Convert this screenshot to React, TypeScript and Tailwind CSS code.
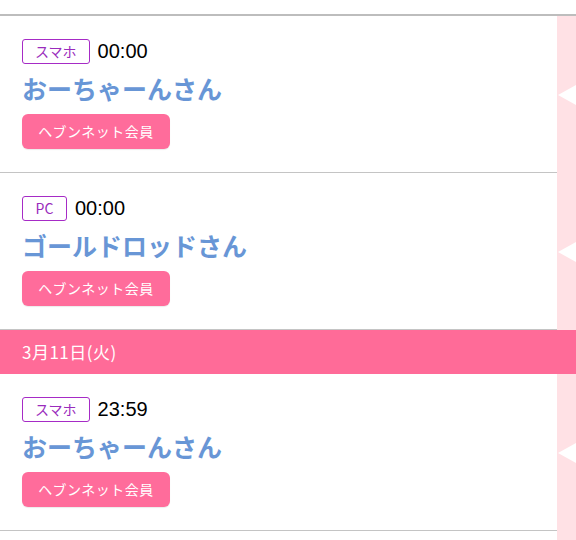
import React from "react";

const font = { fontFamily: '"Noto Sans CJK JP", "Noto Sans", sans-serif' };
const latin = { fontFamily: '"Liberation Sans", "Noto Sans CJK JP", sans-serif' };

function Strip({ tri = true }: { tri?: boolean }) {
  return (
    <div className="w-[19px] shrink-0 bg-[#ffe1e5] flex items-center justify-end">
      {tri && (
        <svg width="18" height="20" viewBox="0 0 18 20" className="block">
          <polygon points="18,0 0,10 18,20" fill="#ffffff" />
        </svg>
      )}
    </div>
  );
}

function Row({ device, time, name }: { device: string; time: string; name: string }) {
  return (
    <div className="flex">
      <div className="flex-1 border-b border-[#c4c4c4] px-[22px] pt-[23px] pb-[23px]">
        <div className="flex items-center h-[25px]">
          <span className="h-[25px] min-w-[45px] px-[12px] border border-[#a62bc6] rounded-[3px] text-[#9a2cbc] text-[14px] leading-[23px] flex items-center justify-center">
            {device}
          </span>
          <span className="ml-[8px] text-[20px] text-black leading-[25px]" style={latin}>
            {time}
          </span>
        </div>
        <div className="mt-[6px] h-[36px] text-[25px] leading-[36px] font-bold text-[#6896d6]">{name}</div>
        <div className="mt-[8px]">
          <span className="inline-flex h-[35px] w-[148px] items-center justify-center rounded-[6px] bg-[#ff6c9b] text-white text-[14px] tracking-[0.5px] shadow-[0_1px_1px_rgba(0,0,0,0.08)]">
            ヘブンネット会員
          </span>
        </div>
      </div>
      <Strip />
    </div>
  );
}

export default function App() {
  return (
    <div className="w-[576px] h-[540px] overflow-hidden bg-white" style={font}>
      <div className="h-[16px] border-b-2 border-[#bdbdbd]" />
      <Row device="スマホ" time="00:00" name="おーちゃーんさん" />
      <Row device="PC" time="00:00" name="ゴールドロッドさん" />
      <div className="h-[44px] bg-[#ff6b98] flex items-center px-[22px] text-white text-[17px] tracking-[0.5px]">
        3月11日(火)
      </div>
      <Row device="スマホ" time="23:59" name="おーちゃーんさん" />
      <div className="flex h-[40px]">
        <div className="flex-1" />
        <Strip tri={false} />
      </div>
    </div>
  );
}
